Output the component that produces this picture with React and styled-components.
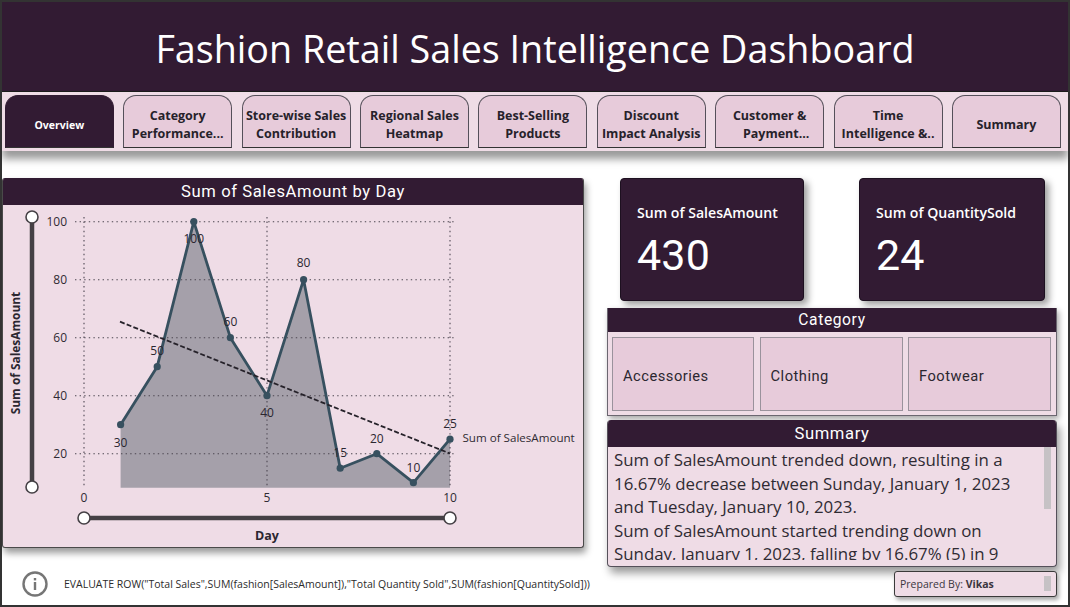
import React from "react";
import styled, { createGlobalStyle } from "styled-components";

const dark = "#321b33";
const pale = "#efdce6";
const tabPink = "#e7cbda";

const tabs = [
  ["Overview"],
  ["Category", "Performance..."],
  ["Store-wise Sales", "Contribution"],
  ["Regional Sales", "Heatmap"],
  ["Best-Selling", "Products"],
  ["Discount", "Impact Analysis"],
  ["Customer &", "\u00a0\u00a0\u00a0\u00a0Payment..."],
  ["Time", "Intelligence &.."],
  ["Summary"],
];

const sales = [30, 50, 100, 60, 40, 80, 15, 20, 10, 25];
// little nudges so that each data label sits where the chart put it
const labelY = [442, 350, 238, 321, 412, 262, 452, 438, 467, 423];
const xAt = (day) => 84 + day * 36.6;
const yAt = (v) => 221.7 + (100 - v) * 2.9;

const Global = createGlobalStyle`
  html, body {
    margin: 0;
    padding: 0;
    background: #fff;
  }
  body {
    font-family: "Open Sans", "Liberation Sans", sans-serif;
  }
`;

const Page = styled.div`
  width: 1070px;
  height: 607px;
  box-sizing: border-box;
  border: 2px solid #333;
  background: #fff;
  overflow: hidden;
  display: flex;
  flex-direction: column;
`;

const Header = styled.header`
  height: 90px;
  flex: none;
  background: ${dark};
  border-bottom: 1px solid #1c1c1c;
  color: #fff;
  font-size: 37.7px;
  display: flex;
  align-items: center;
  justify-content: center;
  padding-top: 4px;
  box-sizing: border-box;
`;

const TabBar = styled.nav`
  height: 59px;
  flex: none;
  background: ${pale};
  box-shadow: 0 8px 8px rgba(0, 0, 0, 0.4);
  display: flex;
  gap: 9.4px;
  padding: 3px 0 3px 2.8px;
  box-sizing: border-box;
`;

const Tab = styled.div`
  width: 109px;
  height: 53px;
  box-sizing: border-box;
  border: 1px solid ${(p) => (p.$active ? dark : "#55505a")};
  border-bottom: 1.5px solid #333;
  border-radius: 13px 13px 0 0;
  background: ${(p) => (p.$active ? dark : tabPink)};
  color: ${(p) => (p.$active ? "#fff" : "#26222a")};
  font-size: ${(p) => (p.$active ? "10.5px" : "12.5px")};
  font-weight: 700;
  line-height: 18px;
  text-align: center;
  white-space: nowrap;
  display: flex;
  flex-direction: column;
  justify-content: center;
  padding-top: 6px;
`;

const Main = styled.main`
  flex: 1;
  display: flex;
  padding-top: 27px;
  min-height: 0;
`;

const LeftColumn = styled.div`
  width: 582px;
  flex: none;
  display: flex;
  flex-direction: column;
`;

const ChartPanel = styled.section`
  height: 370px;
  flex: none;
  background: ${pale};
  border: 1px solid #4a4a4a;
  border-top: none;
  border-radius: 3px;
  box-shadow: 2px 5px 7px rgba(0, 0, 0, 0.4);
  box-sizing: border-box;
  overflow: hidden;
`;

const PanelTitle = styled.h2`
  margin: 0;
  height: ${(p) => p.$h}px;
  background: ${dark};
  color: #fff;
  font-family: Roboto, "Open Sans", sans-serif;
  font-size: ${(p) => p.$size || 16.6}px;
  font-weight: 400;
  letter-spacing: 0.6px;
  display: flex;
  align-items: center;
  justify-content: center;
`;

const ChartSvg = styled.svg`
  display: block;
  width: 580px;
  height: 343px;
  font-family: "Open Sans", "Liberation Sans", sans-serif;
`;

const QueryRow = styled.div`
  display: flex;
  align-items: center;
  gap: 16px;
  padding: 23px 0 0 20px;
  color: #2b2b2b;
  font-size: 10.5px;
  white-space: nowrap;
`;

const InfoSvg = styled.svg`
  flex: none;
  width: 26px;
  height: 26px;
`;

const RightColumn = styled.div`
  width: 450px;
  margin-left: 23px;
  flex: none;
  display: flex;
  flex-direction: column;
`;

const KpiRow = styled.div`
  display: flex;
  gap: 55px;
  padding-left: 13px;
`;

const KpiCard = styled.div`
  width: ${(p) => p.$w}px;
  height: 123px;
  box-sizing: border-box;
  background: ${dark};
  border-radius: 4px;
  border: 1px solid #1d1020;
  box-shadow: 4px 4px 7px rgba(0, 0, 0, 0.38);
  color: #fff;
  padding: 25px 16px 0;
`;

const KpiLabel = styled.div`
  font-size: 14.1px;
  font-weight: 600;
  line-height: 18px;
`;

const KpiValue = styled.div`
  font-family: Roboto, "Open Sans", sans-serif;
  font-size: 43px;
  line-height: 50px;
  margin-top: 8px;
  letter-spacing: 0.2px;
`;

const SlicerPanel = styled.section`
  margin-top: 7px;
  height: 108px;
  box-sizing: border-box;
  background: ${pale};
  border: 1px solid #6b6670;
  border-top: none;
  box-shadow: 2px 3px 6px rgba(0, 0, 0, 0.35);
`;

const SlicerRow = styled.div`
  display: grid;
  grid-template-columns: 142px 143px 143px;
  gap: 5.5px;
  padding: 5px 4px 0;
`;

const SlicerItem = styled.div`
  height: 74px;
  box-sizing: border-box;
  background: ${tabPink};
  border: 1px solid #9a929c;
  color: #2b2730;
  font-family: Roboto, "Open Sans", sans-serif;
  font-size: 14.7px;
  letter-spacing: 0.5px;
  display: flex;
  align-items: center;
  padding: 4px 0 0 10px;
`;

const SummaryPanel = styled.section`
  margin-top: 4px;
  height: 147px;
  box-sizing: border-box;
  background: ${pale};
  border: 1px solid #55505a;
  border-top: none;
  border-radius: 4px;
  box-shadow: 3px 6px 8px rgba(0, 0, 0, 0.4);
  overflow: hidden;
`;

const SummaryBody = styled.div`
  position: relative;
  height: 113px;
  overflow: hidden;
  padding: 1px 20px 0 6px;
  box-sizing: border-box;
`;

const SummaryText = styled.p`
  margin: 0;
  color: #2f2b33;
  font-size: 16.85px;
  line-height: 23.5px;
`;

const ScrollThumb = styled.div`
  position: absolute;
  top: ${(p) => p.$top}px;
  right: ${(p) => p.$right}px;
  width: 7px;
  height: ${(p) => p.$h}px;
  background: #c6c2c5;
`;

const PreparedBox = styled.div`
  position: relative;
  align-self: flex-end;
  width: 163px;
  height: 26px;
  margin-top: 4px;
  box-sizing: border-box;
  background: ${pale};
  border: 1px solid #3a3a3a;
  border-radius: 3px;
  box-shadow: 2px 3px 4px rgba(0, 0, 0, 0.35);
  color: #3b3640;
  font-size: 10.5px;
  line-height: 24px;
  padding-left: 5px;

  b {
    font-weight: 700;
  }
`;

function SalesChart() {
  const line = sales.map((v, i) => `${xAt(i + 1)},${yAt(v)}`).join(" ");
  const area = `${xAt(1)},487.7 ${line} ${xAt(10)},487.7`;
  return (
    <ChartSvg viewBox="3 205 580 343">
      <polygon points={area} fill="#a5a0aa" />
      {[100, 80, 60, 40, 20].map((v) => (
        <g key={v}>
          <line x1="75" x2="456" y1={yAt(v)} y2={yAt(v)} stroke="#4c4650" strokeWidth="1.1" strokeDasharray="1.4 3.2" />
          <text x="67" y={yAt(v) + 4.5} textAnchor="end" fontSize="12" fill="#2f2b33">
            {v}
          </text>
        </g>
      ))}
      {[0, 5, 10].map((d) => (
        <g key={d}>
          <line x1={xAt(d)} x2={xAt(d)} y1="217" y2="488" stroke="#4c4650" strokeWidth="1.1" strokeDasharray="1.4 3.2" />
          <text x={xAt(d)} y="502" textAnchor="middle" fontSize="12" fill="#2f2b33">
            {d}
          </text>
        </g>
      ))}

      <polyline points={line} fill="none" stroke="#37505f" strokeWidth="2.8" strokeLinejoin="round" />
      <line x1="120" y1="321.7" x2="450" y2="453.5" stroke="#26222a" strokeWidth="1.8" strokeDasharray="5 2.2" />
      {sales.map((v, i) => (
        <g key={i}>
          <circle cx={xAt(i + 1)} cy={yAt(v)} r="3.6" fill="#37505f" />
          <text x={xAt(i + 1)} y={labelY[i] + 4.5} textAnchor="middle" fontSize="12" fill="#2b2730">
            {v}
          </text>
        </g>
      ))}
      <text x="462.5" y="442" fontSize="11.6" fill="#2f2b33">
        Sum of SalesAmount
      </text>

      {/* zoom sliders */}
      <line x1="32" x2="32" y1="217" y2="487" stroke="#454045" strokeWidth="4.5" />
      <circle cx="32" cy="217" r="6" fill="#fff" stroke="#454045" strokeWidth="1.6" />
      <circle cx="32" cy="487" r="6" fill="#fff" stroke="#454045" strokeWidth="1.6" />
      <line x1="84" x2="450" y1="518" y2="518" stroke="#454045" strokeWidth="4.5" />
      <circle cx="84" cy="518" r="6" fill="#fff" stroke="#454045" strokeWidth="1.6" />
      <circle cx="450" cy="518" r="6" fill="#fff" stroke="#454045" strokeWidth="1.6" />

      <text x="267" y="540" textAnchor="middle" fontSize="12.5" fontWeight="700" fill="#2b2730">
        Day
      </text>
      <text transform="translate(20 353) rotate(-90)" textAnchor="middle" fontSize="11.9" fontWeight="700" fill="#2b2730">
        Sum of SalesAmount
      </text>
    </ChartSvg>
  );
}

function InfoIcon() {
  return (
    <InfoSvg viewBox="0 0 26 26">
      <circle cx="13" cy="13" r="11.5" fill="none" stroke="#767676" strokeWidth="2.4" />
      <rect x="11.8" y="11" width="2.4" height="8" fill="#767676" />
      <rect x="11.8" y="7" width="2.4" height="2.4" fill="#767676" />
    </InfoSvg>
  );
}

export default function App() {
  return (
    <Page>
      <Global />
      <Header>Fashion Retail Sales Intelligence Dashboard</Header>
      <TabBar>
        {tabs.map((t, i) => (
          <Tab key={t[0]} $active={i === 0}>
            {t.map((l) => (
              <span key={l}>{l}</span>
            ))}
          </Tab>
        ))}
      </TabBar>
      <Main>
        <LeftColumn>
          <ChartPanel>
            <PanelTitle $h={27}>Sum of SalesAmount by Day</PanelTitle>
            <SalesChart />
          </ChartPanel>
          <QueryRow>
            <InfoIcon />
            <span>
              EVALUATE ROW("Total Sales",SUM(fashion[SalesAmount]),"Total Quantity Sold",SUM(fashion[QuantitySold]))
            </span>
          </QueryRow>
        </LeftColumn>
        <RightColumn>
          <KpiRow>
            <KpiCard $w={184}>
              <KpiLabel>Sum of SalesAmount</KpiLabel>
              <KpiValue>430</KpiValue>
            </KpiCard>
            <KpiCard $w={186}>
              <KpiLabel>Sum of QuantitySold</KpiLabel>
              <KpiValue>24</KpiValue>
            </KpiCard>
          </KpiRow>
          <SlicerPanel>
            <PanelTitle $h={24} $size={15.6}>
              Category
            </PanelTitle>
            <SlicerRow>
              <SlicerItem>Accessories</SlicerItem>
              <SlicerItem>Clothing</SlicerItem>
              <SlicerItem>Footwear</SlicerItem>
            </SlicerRow>
          </SlicerPanel>
          <SummaryPanel>
            <PanelTitle $h={27}>Summary</PanelTitle>
            <SummaryBody>
              <SummaryText>
                Sum of SalesAmount trended down, resulting in a 16.67% decrease between Sunday, January 1, 2023 and
                Tuesday, January 10, 2023.
              </SummaryText>
              <SummaryText>
                Sum of SalesAmount started trending down on Sunday, January 1, 2023, falling by 16.67% (5) in 9 days.
              </SummaryText>
              <ScrollThumb $top={0} $right={5} $h={62} />
            </SummaryBody>
          </SummaryPanel>
          <PreparedBox>
            <span>
              Prepared By: <b>Vikas</b>
            </span>
            <ScrollThumb $top={4} $right={5} $h={15} />
          </PreparedBox>
        </RightColumn>
      </Main>
    </Page>
  );
}
